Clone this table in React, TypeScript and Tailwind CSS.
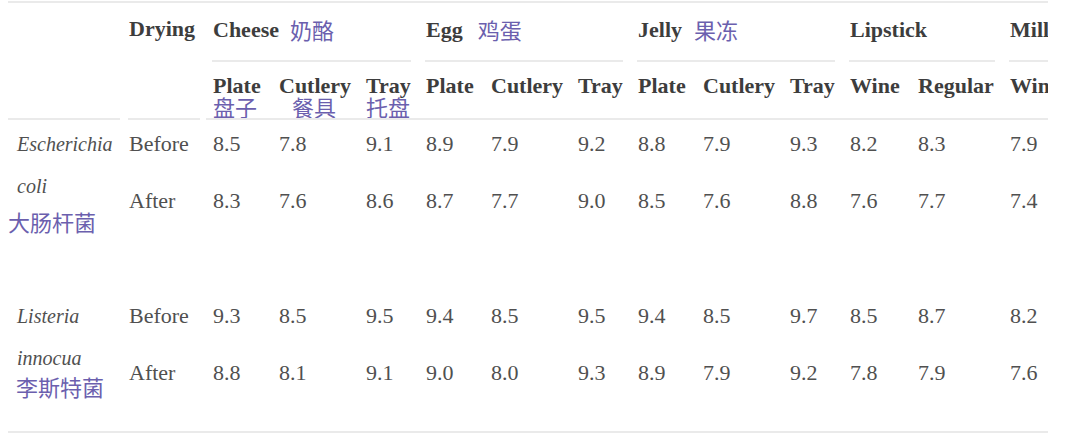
const serif = "font-['Liberation_Serif',serif]";
const cjk = "font-['Noto_Sans_CJK_SC',sans-serif] text-[#6b5fae]";

// widths of the 12 value columns (Plate … Wine)
const colW = [
  "w-[66px]", "w-[87px]", "w-[60px]",
  "w-[65px]", "w-[87px]", "w-[60px]",
  "w-[65px]", "w-[87px]", "w-[60px]",
  "w-[68px]", "w-[92px]", "w-[100px]",
];

const groups = [
  { name: "Cheese", zh: "奶酪", zhGap: "ml-[11px]", w: "w-[213px]", cols: [0, 1, 2] },
  { name: "Egg", zh: "鸡蛋", zhGap: "ml-[15px]", w: "w-[212px]", cols: [3, 4, 5] },
  { name: "Jelly", zh: "果冻", zhGap: "ml-[12px]", w: "w-[212px]", cols: [6, 7, 8] },
  { name: "Lipstick", w: "w-[160px]", cols: [9, 10] },
  { name: "Mill", w: "w-[100px]", cols: [11] },
];

const sub = ["Plate", "Cutlery", "Tray", "Plate", "Cutlery", "Tray", "Plate", "Cutlery", "Tray", "Wine", "Regular", "Wine"];
const subZh: Record<number, { t: string; cls: string }> = {
  0: { t: "盘子", cls: "" },
  1: { t: "餐具", cls: "pl-[13px]" },
  2: { t: "托盘", cls: "" },
};

const blocks = [
  {
    lines: ["Escherichia", "coli"],
    zh: "大肠杆菌",
    wrap: "mt-[3px]",
    zhCls: "mt-[3px] -ml-[9px]",
    rows: [
      ["Before", "8.5", "7.8", "9.1", "8.9", "7.9", "9.2", "8.8", "7.9", "9.3", "8.2", "8.3", "7.9"],
      ["After", "8.3", "7.6", "8.6", "8.7", "7.7", "9.0", "8.5", "7.6", "8.8", "7.6", "7.7", "7.4"],
    ],
  },
  {
    lines: ["Listeria", "innocua"],
    zh: "李斯特菌",
    wrap: "mt-[63px]",
    zhCls: "-mt-[4px] -ml-[1px]",
    rows: [
      ["Before", "9.3", "8.5", "9.5", "9.4", "8.5", "9.5", "9.4", "8.5", "9.7", "8.5", "8.7", "8.2"],
      ["After", "8.8", "8.1", "9.1", "9.0", "8.0", "9.3", "8.9", "7.9", "9.2", "7.8", "7.9", "7.6"],
    ],
  },
];

const DataRow = ({ cells }: { cells: string[] }) => (
  <div className="flex h-[42px] items-center leading-[42px]">
    <div className="w-[78px] shrink-0 pl-px">{cells[0]}</div>
    {cells.slice(1).map((v, i) => (
      <div key={i} className={`${colW[i]} shrink-0 pl-[7px]`}>
        {v}
      </div>
    ))}
  </div>
);

export default function App() {
  return (
    <div className="h-[442px] w-[1080px] bg-white">
      <div className={`w-[1048px] overflow-hidden pl-[8px] text-[22px] text-[#505050] ${serif}`}>
        <div className="mt-px h-[2px] w-full bg-[#eaeaea]" />

        {/* header */}
        <div className="flex">
          <div className="flex w-[120px] shrink-0 flex-col">
            <div className="flex-1" />
            <div className="mr-[8px] h-[2px] bg-[#eaeaea]" />
          </div>
          <div className="flex w-[78px] shrink-0 flex-col">
            <div className="mt-[5px] h-[42px] pl-px font-bold leading-[42px] text-[#3d3d3d]">Drying</div>
            <div className="flex-1" />
            <div className="mr-[6px] h-[2px] bg-[#eaeaea]" />
          </div>
          <div className="flex flex-col">
            <div className="flex">
              {groups.map((g) => (
                <div key={g.name} className={`${g.w} shrink-0`}>
                  <div className="mt-[5px] flex h-[42px] items-center whitespace-nowrap pl-[7px] font-bold text-[#3d3d3d]">
                    <span>{g.name}</span>
                    {g.zh && <span className={`${cjk} ${g.zhGap} text-[22px] font-normal`}>{g.zh}</span>}
                  </div>
                  <div className="mt-[10px] ml-[6px] mr-[8px] h-[2px] bg-[#eaeaea]" />
                  <div className="flex">
                    {g.cols.map((c) => (
                      <div key={c} className={`${colW[c]} shrink-0 pl-[7px] pt-[12px]`}>
                        <div className="h-[24px] whitespace-nowrap font-bold leading-[24px] text-[#3d3d3d]">{sub[c]}</div>
                        <div className={`h-[20px] whitespace-nowrap text-[22px] leading-[17px] ${cjk} ${subZh[c]?.cls ?? ""}`}>
                          {subZh[c]?.t ?? ""}
                        </div>
                      </div>
                    ))}
                  </div>
                </div>
              ))}
            </div>
            <div className="h-[2px] w-full bg-[#eaeaea]" />
          </div>
        </div>

        {/* body */}
        {blocks.map((b, bi) => (
          <div key={bi} className={`flex ${b.wrap}`}>
            <div className="flex w-[120px] shrink-0 flex-col pl-[9px] text-[20px] italic">
              {b.lines.map((l) => (
                <div key={l} className="h-[42px] leading-[42px]">
                  {l}
                </div>
              ))}
              <div className={`${cjk} ${b.zhCls} whitespace-nowrap text-[22px] not-italic leading-[22px]`}>{b.zh}</div>
            </div>
            <div className="flex flex-col gap-[15px]">
              {b.rows.map((r, ri) => (
                <DataRow key={ri} cells={r} />
              ))}
            </div>
          </div>
        ))}

        <div className="mt-[34px] h-[2px] w-full bg-[#eaeaea]" />
      </div>
    </div>
  );
}
